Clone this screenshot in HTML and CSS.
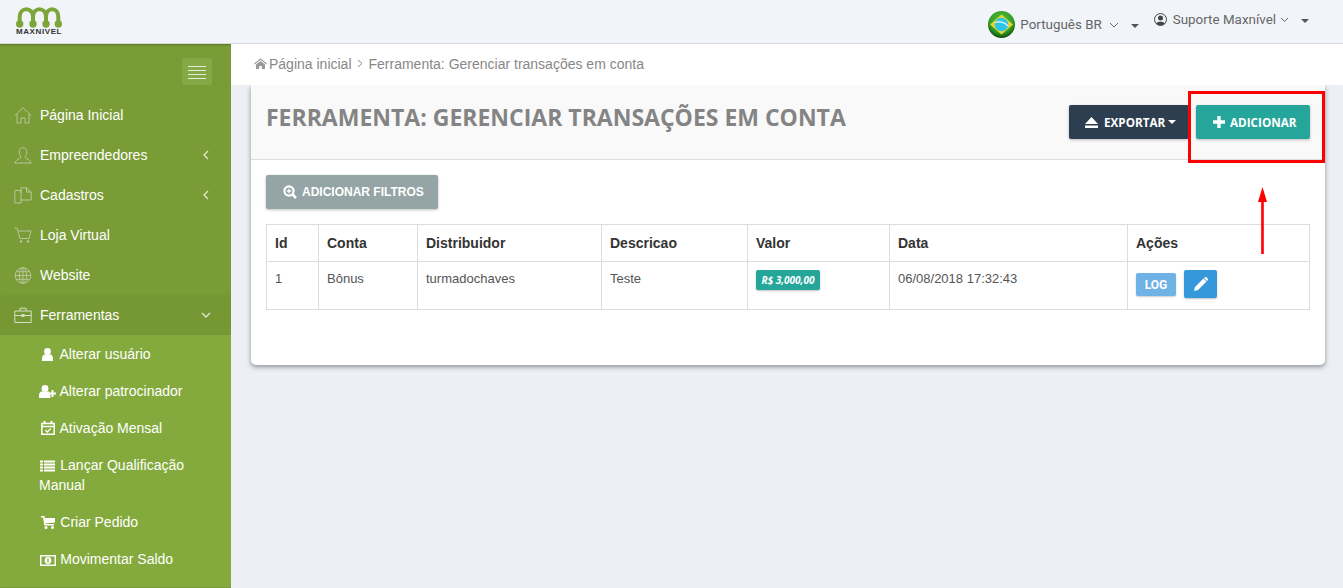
FILE: index.html
```html
<!DOCTYPE html>
<html lang="pt-BR">
<head>
<meta charset="utf-8">
<title>Ferramenta: Gerenciar transações em conta</title>
<link rel="stylesheet" href="styles.css">
</head>
<body>
<header class="topbar">
  <div class="logo">
    <svg class="logo-mark" width="46" height="22" viewBox="0 0 46 22">
      <g fill="none" stroke="#7ea53a" stroke-width="4">
        <path d="M3.700 18V11C3.700 .5 17 .5 17 11V18"/>
        <path d="M17 11C17 .5 30 .5 30 11V18"/>
        <path d="M30 11C30 .5 42.300 .5 42.300 11V18"/>
      </g>
      <g fill="#7ea53a">
        <circle cx="3.700" cy="18" r="3.700"/><circle cx="17" cy="18" r="3.700"/><circle cx="30" cy="18" r="3.700"/><circle cx="42.300" cy="18" r="3.700"/>
      </g>
    </svg>
    <span class="logo-text">MAXNIVEL</span>
  </div>
  <div class="top-right">
    <div class="lang">
      <svg class="flag" width="27" height="27" viewBox="0 0 27 27">
        <defs>
          <radialGradient id="globe" cx="50%" cy="35%" r="65%">
            <stop offset="0" stop-color="#58c43c"/><stop offset=".7" stop-color="#2f9a28"/><stop offset="1" stop-color="#0f4a0c"/>
          </radialGradient>
        </defs>
        <circle cx="13.500" cy="13.500" r="13.500" fill="url(#globe)"/>
        <path d="M13.500 3.500L25 13.500L13.500 23.500L2 13.500Z" fill="#e6d62e"/>
        <circle cx="13.500" cy="13.500" r="6.800" fill="#2fc4e6"/>
        <path d="M7 11.500C11 10 16.500 11 20 15" fill="none" stroke="#eafaff" stroke-width="1.200"/>
      </svg>
      <span>Português BR</span>
      <svg class="chev" width="10" height="6" viewBox="0 0 10 6"><path d="M1 1L5 5L9 1" fill="none" stroke="#666" stroke-width="1"/></svg>
      <span class="caret"></span>
    </div>
    <div class="user">
      <svg class="avatar" width="13" height="13" viewBox="0 0 13 13">
        <circle cx="6.500" cy="6.500" r="6" fill="none" stroke="#444" stroke-width="1"/>
        <circle cx="6.500" cy="5" r="2.500" fill="#444"/>
        <path d="M2.200 10.500C3 8 10 8 10.800 10.500C9 12.500 4 12.500 2.200 10.500Z" fill="#444"/>
      </svg>
      <span>Suporte Maxnível</span>
      <svg class="chev" width="9" height="6" viewBox="0 0 9 6"><path d="M1 1L4.500 4.500L8 1" fill="none" stroke="#666" stroke-width="1"/></svg>
      <span class="caret"></span>
    </div>
  </div>
</header>
<div class="shell">
  <aside class="sidebar">
    <div class="toggle-row">
      <button class="toggle" type="button" aria-label="Menu"><span></span><span></span><span></span><span></span></button>
    </div>
    <nav class="menu">
      <a class="item">
        <svg class="mi" width="18" height="17" viewBox="0 0 18 17"><path d="M.8 8.500L9 .8L17.200 8.500M3 7V16H7V11H11V16H15V7" fill="none" stroke="#b6c79c" stroke-width="1"/></svg>
        <span class="label">Página Inicial</span>
      </a>
      <a class="item">
        <svg class="mi" width="18" height="17" viewBox="0 0 18 17"><path d="M9 .8C5.500 .8 5 3.500 5.300 6C5.600 8 6.500 9 7 10C7 11.500 1.500 12.500 .8 16H17.200C16.500 12.500 11 11.500 11 10C11.500 9 12.400 8 12.700 6C13 3.500 12.500 .8 9 .8Z" fill="none" stroke="#b6c79c" stroke-width="1"/></svg>
        <span class="label">Empreendedores</span>
        <svg class="arrow" width="6" height="10" viewBox="0 0 6 10"><path d="M5 1L1 5L5 9" fill="none" stroke="#dfe8cf" stroke-width="1.300"/></svg>
      </a>
      <a class="item">
        <svg class="mi" width="18" height="17" viewBox="0 0 18 17"><path d="M.8 3.500H7V16H.8ZM7 6V.8H12.500L17.200 5V13H7M12.500 .8V5H17.200" fill="none" stroke="#b6c79c" stroke-width="1"/></svg>
        <span class="label">Cadastros</span>
        <svg class="arrow" width="6" height="10" viewBox="0 0 6 10"><path d="M5 1L1 5L5 9" fill="none" stroke="#dfe8cf" stroke-width="1.300"/></svg>
      </a>
      <a class="item">
        <svg class="mi" width="18" height="17" viewBox="0 0 18 17"><path d="M.5 1H3L6 11.500H15L17 4H3.800" fill="none" stroke="#b6c79c" stroke-width="1"/><circle cx="7" cy="14.500" r="1.300" fill="#b6c79c"/><circle cx="14" cy="14.500" r="1.300" fill="#b6c79c"/></svg>
        <span class="label">Loja Virtual</span>
      </a>
      <a class="item">
        <svg class="mi" width="18" height="17" viewBox="0 0 18 17"><g fill="none" stroke="#b6c79c" stroke-width="1"><circle cx="9" cy="8.500" r="7.800"/><ellipse cx="9" cy="8.500" rx="3.600" ry="7.800"/><path d="M9 .7V16.300M1.200 8.500H16.800M2.200 4.700H15.800M2.200 12.300H15.800"/></g></svg>
        <span class="label">Website</span>
      </a>
      <a class="item open">
        <svg class="mi" width="18" height="17" viewBox="0 0 18 17"><path d="M.8 4H17.200V15.500H.8ZM6 4V1.200H12V4M.8 8.500H17.200" fill="none" stroke="#d5dfc3" stroke-width="1"/><rect x="7.500" y="7" width="3" height="3" fill="#d5dfc3"/></svg>
        <span class="label">Ferramentas</span>
        <svg class="arrow-down" width="10" height="6" viewBox="0 0 10 6"><path d="M1 1L5 5L9 1" fill="none" stroke="#dfe8cf" stroke-width="1.300"/></svg>
      </a>
      <div class="submenu">
        <a class="sub">
          <span class="slot"><svg class="si" width="11" height="13" viewBox="0 0 11 13"><circle cx="5.500" cy="3.500" r="3.400" fill="#fff"/><path d="M0 12.900V10C0 7.500 2 6.200 3 6.200C4.500 7.300 6.500 7.300 8 6.200C9 6.200 11 7.500 11 10V12.900Z" fill="#fff"/></svg></span>
          Alterar usuário
        </a>
        <a class="sub">
          <span class="slot"><svg class="si" width="17" height="13" viewBox="0 0 17 13"><circle cx="6" cy="3.500" r="3.400" fill="#fff"/><path d="M0 12.900V10C0 7.500 2 6.200 3.500 6.200C5 7.300 7 7.300 8.500 6.200C10 6.200 11.500 7.500 11.500 12.900Z" fill="#fff"/><path d="M10 8.500H17M13.500 5V12" stroke="#fff" stroke-width="2"/></svg></span>
          Alterar patrocinador
        </a>
        <a class="sub">
          <span class="slot"><svg class="si" width="14" height="14" viewBox="0 0 14 14"><path d="M.8 2.500H13.200V13.200H.8ZM.8 5.500H13.200" fill="none" stroke="#fff" stroke-width="1.500"/><path d="M3.500 0V3M10.500 0V3" stroke="#fff" stroke-width="2"/><path d="M4.300 9L6.300 11L9.800 7.500" fill="none" stroke="#fff" stroke-width="1.300"/></svg></span>
          Ativação Mensal
        </a>
        <a class="sub">
          <span class="slot"><svg class="si" width="15" height="12" viewBox="0 0 15 12"><path d="M0 1.500H3M4 1.500H15M0 4.500H3M4 4.500H15M0 7.500H3M4 7.500H15M0 10.500H3M4 10.500H15" stroke="#fff" stroke-width="2"/></svg></span>
          Lançar Qualificação Manual
        </a>
        <a class="sub">
          <span class="slot"><svg class="si" width="14" height="13" viewBox="0 0 14 13"><path d="M0 .8H2.800L4 8.800H13" fill="none" stroke="#fff" stroke-width="1.600"/><path d="M3 2H14V6.500L3.800 7.500Z" fill="#fff"/><circle cx="5" cy="11.500" r="1.500" fill="#fff"/><circle cx="11.500" cy="11.500" r="1.500" fill="#fff"/></svg></span>
          Criar Pedido
        </a>
        <a class="sub">
          <span class="slot"><svg class="si" width="16" height="11" viewBox="0 0 16 11"><rect width="16" height="11" fill="#fff"/><rect x="1.500" y="1.500" width="13" height="8" fill="#84aa3d"/><circle cx="8" cy="5.500" r="3.400" fill="#fff"/><path d="M8 3.500V7.500" stroke="#84aa3d" stroke-width="1.200"/></svg></span>
          Movimentar Saldo
        </a>
      </div>
    </nav>
  </aside>
  <main class="main">
    <div class="crumbs">
      <svg class="crumb-home" width="13" height="11" viewBox="0 0 13 11"><path d="M0 5.800L6.500 .3L13 5.800L12.200 6.600L6.500 1.800L.8 6.600ZM2 6.600L6.500 3L11 6.600V11H7.800V8H5.200V11H2Z" fill="#999"/></svg>
      <span>Página inicial</span>
      <svg class="crumb-sep" width="6" height="9" viewBox="0 0 6 9"><path d="M1 1L5 4.500L1 8" fill="none" stroke="#888" stroke-width="1"/></svg>
      <span>Ferramenta: Gerenciar transações em conta</span>
    </div>
    <section class="card">
      <div class="card-head">
        <h1 class="title">FERRAMENTA: GERENCIAR TRANSAÇÕES EM CONTA</h1>
        <div class="actions">
          <button class="btn btn-dark" type="button">
            <svg width="13" height="11" viewBox="0 0 13 11"><path d="M6.500 0L13 7H0ZM0 8.500H13V11H0Z" fill="#fff"/></svg>
            EXPORTAR <span class="caret caret-w"></span>
          </button>
          <button class="btn btn-teal" type="button">
            <svg width="12" height="12" viewBox="0 0 12 12"><path d="M6 0V12M0 6H12" stroke="#fff" stroke-width="3.400"/></svg>
            ADICIONAR
          </button>
          <div class="highlight"></div>
          <svg class="red-arrow" width="9" height="67" viewBox="0 0 9 67"><path d="M4.500 0L9 15H5.800V67H3.200V15H0Z" fill="#f00"/></svg>
        </div>
      </div>
      <div class="card-body">
        <button class="btn btn-grey" type="button">
          <svg width="14" height="14" viewBox="0 0 14 14"><circle cx="6" cy="6" r="4.600" fill="none" stroke="#fff" stroke-width="2.200"/><path d="M9.500 9.500L13 13" stroke="#fff" stroke-width="2.600"/><path d="M3.800 6H8.200M6 3.800V8.200" stroke="#fff" stroke-width="1.300"/></svg>
          ADICIONAR FILTROS
        </button>
        <table class="grid">
          <colgroup>
            <col class="c1"><col class="c2"><col class="c3"><col class="c4"><col class="c5"><col class="c6"><col class="c7">
          </colgroup>
          <thead>
            <tr><th>Id</th><th>Conta</th><th>Distribuidor</th><th>Descricao</th><th>Valor</th><th>Data</th><th>Ações</th></tr>
          </thead>
          <tbody>
            <tr>
              <td>1</td><td>Bônus</td><td>turmadochaves</td><td>Teste</td>
              <td><span class="money">R$ 3,000,00</span></td>
              <td>06/08/2018 17:32:43</td>
              <td>
                <div class="row-actions">
                  <button class="btn-log" type="button">LOG</button>
                  <button class="btn-edit" type="button" aria-label="Editar">
                    <svg width="14" height="14" viewBox="0 0 14 14"><path d="M0 14L1 10L9.500 1.500L12.500 4.500L4 13ZM10.500 .5C11.200 -.2 12 -.2 12.700 .5L13.500 1.300C14.200 2 14.200 2.800 13.500 3.500L13 4L10 1Z" fill="#fff"/></svg>
                  </button>
                </div>
              </td>
            </tr>
          </tbody>
        </table>
      </div>
    </section>
  </main>
</div>
</body>
</html>
```
FILE: styles.css
```css
* { box-sizing: border-box; }
html, body { margin: 0; height: 100%; overflow: hidden; }
body {
  background: #ecf0f5;
  font-family: "Liberation Sans", Arial, sans-serif;
  font-size: 14px;
  color: #555;
  display: flex;
  flex-direction: column;
}
.topbar {
  height: 44px;
  flex: none;
  background: #f1f4f9;
  border-bottom: 1px solid #d9d9d9;
  display: flex;
  justify-content: space-between;
  padding: 0 34px 0 16px;
  position: relative;
  z-index: 2;
}
.logo { display: flex; flex-direction: column; align-items: center; width: 46px; padding-top: 6px; }
.logo-mark { display: block; }
.logo-text {
  font-weight: bold;
  font-size: 8px;
  line-height: 8px;
  margin-top: 0;
  color: #333;
  letter-spacing: .6px;
  white-space: nowrap;
}
.top-right { display: flex; align-items: flex-start; font-family: Roboto, sans-serif; font-size: 13.400px; color: #666; }
.lang { display: flex; align-items: center; padding-top: 11px; }
.flag { margin-right: 5px; }
.lang .chev { margin-left: 7px; }
.lang .caret { margin-left: 12px; margin-top: 3px; }
.user { display: flex; align-items: center; margin-left: 15px; padding-top: 12px; }
.avatar { margin-right: 6px; }
.user .chev { margin-left: 4px; }
.user .caret { margin-left: 12px; margin-top: 2px; }
.caret {
  display: inline-block;
  width: 0; height: 0;
  border-left: 4px solid transparent;
  border-right: 4px solid transparent;
  border-top: 4px solid #555;
}
.caret-w { border-top-color: #fff; margin-left: -3px; flex: none; }
.shell { flex: 1; display: flex; min-height: 0; }
.sidebar {
  width: 231px;
  flex: none;
  background: #7a9c37;
  overflow: hidden;
  box-shadow: inset 0 2px 2px -1px rgba(0,0,0,.25);
}
.toggle-row { display: flex; justify-content: flex-end; padding: 14px 19px 0 0; height: 51px; }
.toggle {
  width: 30px; height: 27px;
  background: #86a947;
  border: 0;
  border-radius: 3px;
  padding: 8px 6px 6px;
  display: flex;
  flex-direction: column;
  justify-content: space-between;
}
.toggle span { display: block; height: 1px; background: #e4ecd5; }
.menu { display: flex; flex-direction: column; }
.item {
  height: 40px;
  display: flex;
  align-items: center;
  padding: 0 20px 0 14px;
  color: #fff;
}
.item .label { margin-left: 8px; flex: 1; }
.item .arrow { margin-right: 2px; }
.item.open { background: #769834; }
.submenu { background: #84aa3d; padding: 0 0 10px; }
.sub {
  display: block;
  color: #fff;
  padding: 9px 30px 9px 39px;
  line-height: 20px;
  margin-bottom: -1px;
}
.slot { display: inline-block; width: 17.400px; text-align: center; }
.si { vertical-align: -2px; }
.main { flex: 1; min-width: 0; display: flex; flex-direction: column; }
.crumbs {
  height: 41px;
  background: #fff;
  display: flex;
  align-items: center;
  padding: 0 0 2px 23px;
  color: #888;
  flex: none;
  position: relative;
  z-index: 1;
}
.crumb-home { margin-right: 2px; }
.crumb-sep { margin: 0 6px 0 5px; }
.card {
  margin: 0 18px 0 20px;
  height: 280px;
  background: #fff;
  border-radius: 0 0 5px 5px;
  box-shadow: 0 2px 5px rgba(0,0,0,.4);
  position: relative;
}
.card-head {
  height: 75px;
  background: #f9f9f9;
  border-bottom: 1px solid #ddd;
  display: flex;
  justify-content: space-between;
  padding: 20px 15px 0 15px;
}
.title {
  margin: -1px 0 0;
  font-family: "Open Sans", sans-serif;
  font-weight: bold;
  font-size: 23px;
  line-height: 26px;
  color: #848484;
}
.actions { display: flex; gap: 7px; position: relative; }
.btn {
  height: 34px;
  border: 0;
  border-radius: 2px;
  color: #fff;
  font-family: "Open Sans", sans-serif;
  font-weight: bold;
  font-size: 11.700px;
  display: inline-flex;
  align-items: center;
  gap: 5px;
  padding: 0 0 0 17px;
  box-shadow: 0 1px 3px rgba(0,0,0,.25);
  white-space: nowrap;
}
.btn svg { flex: none; }
.btn-dark { background: #2d3e50; width: 120px; gap: 6px; padding-left: 16px; }
.btn-teal { background: #26a69a; width: 114px; }
.btn-grey { background: #95a5a6; width: 172px; font-family: "Liberation Sans", sans-serif; font-size: 12px; padding-bottom: 1px; }
.highlight {
  position: absolute;
  left: 119px; top: -14px;
  width: 137px; height: 72px;
  border: 3px solid #f00;
}
.red-arrow { position: absolute; left: 189px; top: 82px; z-index: 3; }
.card-body { padding: 15px 15px 0; }
.grid {
  margin-top: 15px;
  width: 1043px;
  border-collapse: collapse;
  table-layout: fixed;
}
.c1 { width: 52px; } .c2 { width: 99px; } .c3 { width: 184px; } .c4 { width: 146px; }
.c5 { width: 142px; } .c6 { width: 238px; } .c7 { width: 182px; }
.grid th, .grid td { border: 1px solid #ddd; padding: 8px; text-align: left; vertical-align: top; }
.grid th { color: #333; font-weight: bold; line-height: 20px; }
.grid td { height: 48px; color: #555; font-size: 13px; line-height: 18px; }
.money {
  display: inline-block;
  background: #26a69a;
  color: #fff;
  font-family: "Open Sans", sans-serif;
  font-weight: bold;
  font-style: italic;
  font-size: 10px;
  line-height: 20px;
  height: 20px;
  padding: 0 5.500px;
  border-radius: 2px;
  box-shadow: 0 1px 2px rgba(0,0,0,.25);
  vertical-align: top;
}
.row-actions { display: flex; gap: 8px; align-items: flex-start; }
.btn-log {
  margin-top: 3px;
  width: 40px; height: 23px;
  background: #6fb2e6;
  border: 0;
  border-radius: 2px;
  color: #fff;
  font-family: Roboto, sans-serif;
  font-weight: bold;
  font-size: 12px;
  padding: 0;
  box-shadow: 0 1px 2px rgba(0,0,0,.2);
}
.btn-edit {
  width: 33px; height: 28px;
  background: #3498db;
  border: 0;
  border-radius: 2px;
  padding: 0;
  display: flex;
  align-items: center;
  justify-content: center;
  box-shadow: 0 1px 2px rgba(0,0,0,.25);
}
```
